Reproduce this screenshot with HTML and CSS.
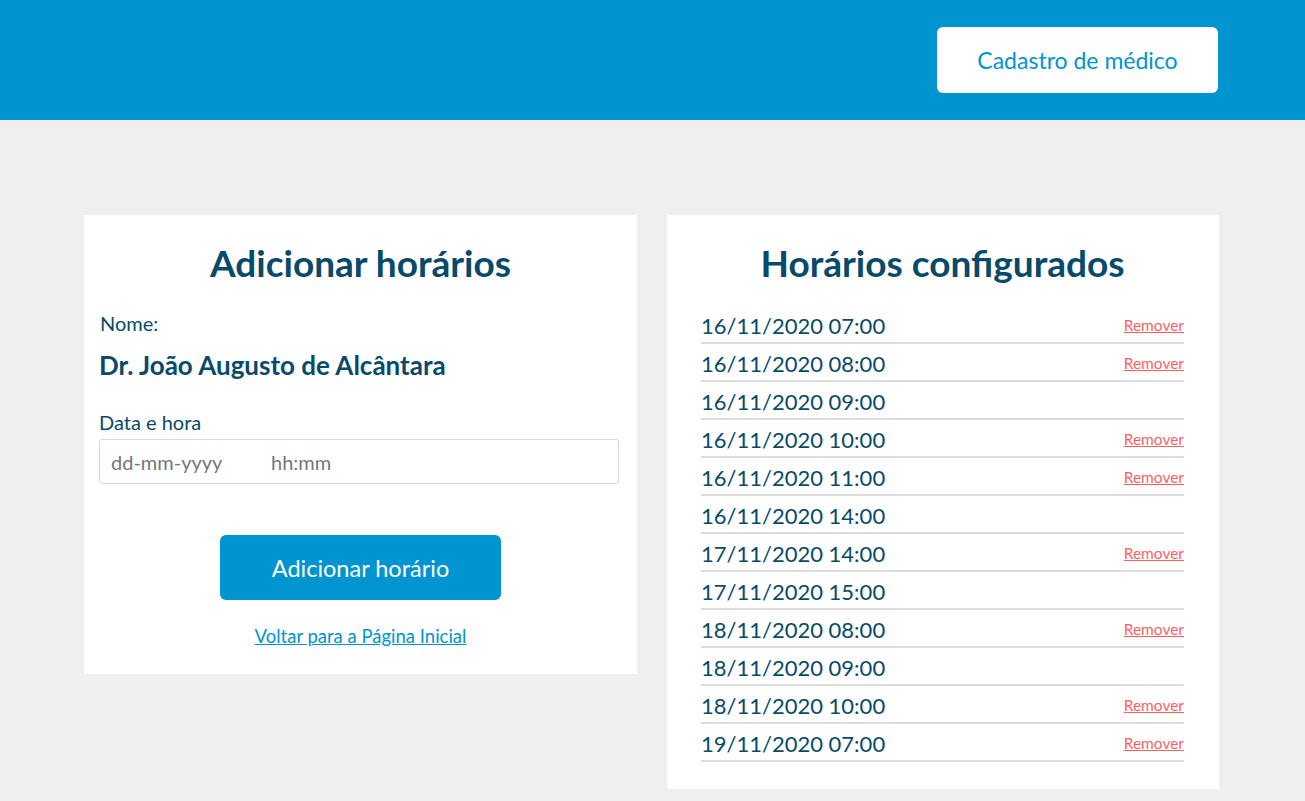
FILE: index.html
```html
<!DOCTYPE html>
<html lang="pt-BR">
<head>
<meta charset="utf-8">
<title>Horários</title>
<link rel="stylesheet" href="styles.css">
</head>
<body>
<header class="topbar">
  <div class="topbar-inner">
    <a class="btn-light" href="#">Cadastro de médico</a>
  </div>
</header>
<main class="content">
  <section class="card card-form">
    <h1 class="card-title">Adicionar horários</h1>
    <div class="label label-name">Nome:</div>
    <div class="doctor">Dr. João Augusto de Alcântara</div>
    <div class="label label-date">Data e hora</div>
    <div class="input"><span class="ph-date">dd-mm-yyyy</span><span class="ph-time">hh:mm</span></div>
    <div class="actions">
      <button class="btn-primary" type="button">Adicionar horário</button>
      <a class="back-link" href="#">Voltar para a Página Inicial</a>
    </div>
  </section>
  <section class="card card-list">
    <h1 class="card-title">Horários configurados</h1>
    <ul class="slots">
      <li class="slot"><span>16/11/2020 07:00</span><a class="remove" href="#">Remover</a></li>
      <li class="slot"><span>16/11/2020 08:00</span><a class="remove" href="#">Remover</a></li>
      <li class="slot"><span>16/11/2020 09:00</span></li>
      <li class="slot"><span>16/11/2020 10:00</span><a class="remove" href="#">Remover</a></li>
      <li class="slot"><span>16/11/2020 11:00</span><a class="remove" href="#">Remover</a></li>
      <li class="slot"><span>16/11/2020 14:00</span></li>
      <li class="slot"><span>17/11/2020 14:00</span><a class="remove" href="#">Remover</a></li>
      <li class="slot"><span>17/11/2020 15:00</span></li>
      <li class="slot"><span>18/11/2020 08:00</span><a class="remove" href="#">Remover</a></li>
      <li class="slot"><span>18/11/2020 09:00</span></li>
      <li class="slot"><span>18/11/2020 10:00</span><a class="remove" href="#">Remover</a></li>
      <li class="slot"><span>19/11/2020 07:00</span><a class="remove" href="#">Remover</a></li>
    </ul>
  </section>
</main>
</body>
</html>
```
FILE: styles.css
```css
* { box-sizing: border-box; }
html, body { margin: 0; padding: 0; }
body {
  background: #efefef;
  font-family: Lato, "Noto Sans", sans-serif;
  color: #084a69;
}
.topbar {
  background: #0095d0;
  height: 120px;
}
.topbar-inner {
  width: 1135px;
  margin: 0 0 0 84px;
  height: 100%;
  display: flex;
  justify-content: flex-end;
  align-items: center;
  padding-right: 1px;
}
.btn-light {
  display: flex;
  align-items: center;
  justify-content: center;
  width: 281px;
  height: 66px;
  background: #fff;
  border-radius: 6px;
  color: #0095d0;
  text-decoration: none;
  font-size: 23px;
}
.content {
  width: 1135px;
  margin: 95px 0 0 84px;
  display: flex;
  gap: 30px;
  align-items: flex-start;
}
.card {
  background: #fff;
  padding: 26px 15px 28px;
}
.card-form { width: 553px; }
.card-list { width: 552px; padding: 26px 35px 27px 34px; }
.card-title {
  margin: 0;
  text-align: center;
  font-size: 37px;
  line-height: 44px;
  font-weight: 700;
  color: #084a69;
}
.label {
  font-size: 20px;
  line-height: 22px;
  padding-left: 1px;
}
.label-name { margin-top: 27px; }
.doctor {
  margin-top: 16px;
  font-size: 26px;
  line-height: 30px;
  font-weight: 700;
}
.label-date { margin-top: 31px; padding-left: 0; }
.input {
  margin-top: 6px;
  height: 45px;
  border: 1px solid #d8d8d8;
  border-radius: 3px;
  display: flex;
  align-items: center;
  padding-left: 11px;
  font-size: 20px;
  color: #767676;
  width: 520px;
}
.ph-date { width: 160px; }
.actions {
  display: flex;
  flex-direction: column;
  align-items: center;
}
.btn-primary {
  margin-top: 51px;
  width: 281px;
  height: 65px;
  border: none;
  border-radius: 6px;
  background: #0095d0;
  color: #fff;
  font-family: inherit;
  font-size: 23.5px;
}
.back-link {
  margin-top: 26px;
  font-size: 18.5px;
  line-height: 20px;
  color: #0095d0;
}
.slots {
  list-style: none;
  margin: 21px 0 0;
  padding: 0;
}
.slot {
  height: 38px;
  border-bottom: 2px solid #dcdcdc;
  display: flex;
  align-items: center;
  justify-content: space-between;
  font-size: 22px;
  padding-top: 2px;
}
.remove {
  font-size: 15.5px;
  color: #ff5f5f;
}
```
